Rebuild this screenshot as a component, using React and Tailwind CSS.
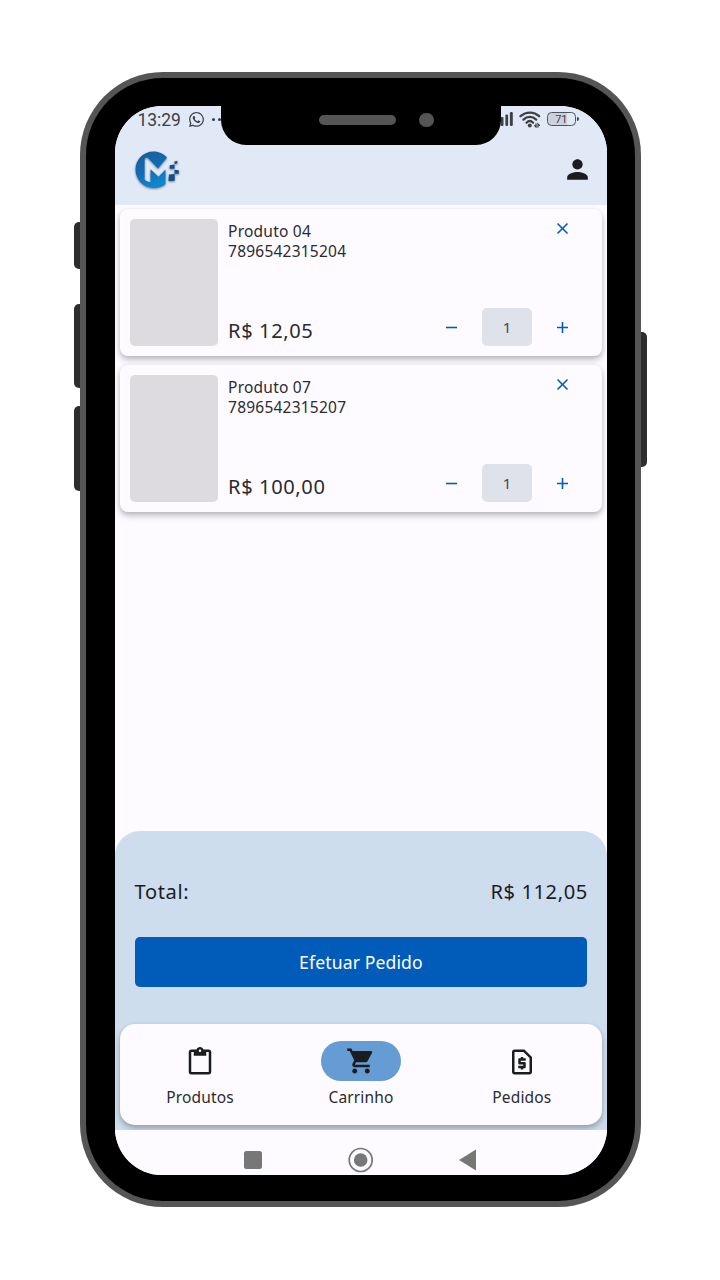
import React from 'react';
import {
  MdPerson,
  MdClose,
  MdAdd,
  MdRemove,
  MdContentPaste,
  MdShoppingCart,
  MdOutlineRequestPage,
} from 'react-icons/md';
import { FaWhatsapp } from 'react-icons/fa';

const products = [
  { name: 'Produto 04', code: '7896542315204', price: 'R$ 12,05', qty: 1 },
  { name: 'Produto 07', code: '7896542315207', price: 'R$ 100,00', qty: 1 },
];

function Logo() {
  return (
    <svg width="46" height="40" viewBox="0 0 46 40" className="drop-shadow-[0_1px_1px_rgba(40,50,70,0.6)]">
      <defs>
        <linearGradient id="logoBlue" x1="0" y1="0" x2="0.4" y2="1">
          <stop offset="0" stopColor="#165d9c" />
          <stop offset="0.55" stopColor="#106bb0" />
          <stop offset="1" stopColor="#0c86cc" />
        </linearGradient>
      </defs>
      <path
        d="M32 6.500C28.800 3 24 0.500 18.600 0.500C8.400 0.500 0.500 8.500 0.500 18.500S8.400 37 18.600 37C23.200 37 27.400 35.800 30.500 33V18.500L23.500 25.800L15.500 18.300V31.200C12.600 30.800 10.200 29.600 9.600 28.500V7.600L12.500 6.600L23 17.400Z"
        fill="url(#logoBlue)"
      />
      <path d="M39.500 10.500L42.300 9.700V12.400L39.600 13ZM34.700 14.300L39.500 13.500V17.700H34.700ZM39.500 18.800L43.800 19.200V22.700H39.500ZM34 23.500L39.700 23V29.700L33.500 30Z" fill="#174d8c" />
    </svg>
  );
}

function SignalIcon() {
  return (
    <svg width="13" height="14" viewBox="0 0 13 14" fill="#3d4047">
      <rect x="0.800" y="5" width="2.700" height="9" rx="1" />
      <rect x="5.400" y="2.500" width="2.700" height="11.500" rx="1.100" />
      <rect x="9.900" y="0" width="2.900" height="14" rx="1.200" />
    </svg>
  );
}

function WifiIcon() {
  return (
    <svg width="22" height="17" viewBox="0 0 22 17" fill="none" stroke="#3d4047" strokeWidth="2.300" strokeLinecap="round">
      <path d="M1.500 5.200C7 0.300 15 0.300 20.100 5.200" />
      <path d="M4.400 8.600C8.200 5 13.500 5 17.200 8.600" />
      <path d="M7.500 11.700C9.500 9.700 12.100 9.700 14.100 11.700" />
      <circle cx="10.800" cy="14.500" r="2" fill="#3d4047" stroke="none" />
      <path d="M15.800 14.600L17 16V13M19 16V13L20.400 14.400" strokeWidth="1.300" />
    </svg>
  );
}

function StatusBar() {
  return (
    <div className="flex h-[27px] items-center justify-between pl-[23px] pr-[28.500px] text-[#3d4047]">
      <div className="flex items-center">
        <span className="w-[50px] pt-[2px] font-['Roboto',sans-serif] text-[17.500px] leading-[27px] tracking-[-0.100px]">13:29</span>
        <FaWhatsapp size={17} />
        <div className="flex gap-[3px] pl-[7px]">
          <span className="size-[3px] rounded-full bg-[#3d4047]" />
          <span className="size-[3px] rounded-full bg-[#3d4047]" />
        </div>
      </div>
      <div className="flex items-center pb-px">
        <SignalIcon />
        <div className="pl-[6px] pr-[6px]">
          <WifiIcon />
        </div>
        <div className="flex h-[14px] w-[29px] items-center justify-center rounded-[4.500px] border-[1.500px] border-[#50535b] bg-[linear-gradient(90deg,#ccd2dd_0,#ccd2dd_70%,#e1e9f6_70%)] font-['Roboto',sans-serif] text-[11px] leading-none">
          71
        </div>
        <span className="ml-px h-[4px] w-[2px] rounded-r-sm bg-[#3d4047]" />
      </div>
    </div>
  );
}

function Header() {
  return (
    <header className="h-[98.500px] shrink-0 bg-[#e1e9f6]">
      <StatusBar />
      <div className="flex h-[71px] items-center justify-between pl-[20px] pr-[14.500px] text-[#1b1c1f]">
        <div className="pt-[5px]">
          <Logo />
        </div>
        <div className="pt-[2px]">
          <MdPerson size={31} />
        </div>
      </div>
    </header>
  );
}

function ProductCard({ product }) {
  return (
    <article className="flex h-[146.500px] rounded-[8px] bg-[#fdfbff] p-[10px] shadow-[0_4px_6px_rgba(0,0,0,0.22),0_1px_4px_rgba(0,0,0,0.1)]">
      <div className="w-[88px] shrink-0 rounded-[5px] bg-[#dddbe0]" />
      <div className="flex flex-1 flex-col justify-between pl-[10.500px] text-[#2a2b2f]">
        <div className="pt-[2px] text-[15.500px] leading-[20.100px] tracking-[0.220px]">
          <p>{product.name}</p>
          <p>{product.code}</p>
        </div>
        <p className="text-[20.080px] leading-[30px] tracking-[0.600px]">{product.price}</p>
      </div>
      <div className="flex w-[151px] flex-col items-end justify-between pr-[20.500px] text-[#005cb8]">
        <button className="flex h-[19px] w-[19px] items-end justify-center">
          <MdClose size={19} />
        </button>
        <div className="flex w-full items-center justify-between pl-px">
          <MdRemove size={19} className="mt-[2px]" />
          <span className="flex h-[38px] w-[50px] items-center justify-center rounded-[5px] bg-[#dfe2eb] pt-[2px] text-[15px] text-[#43474e]">
            {product.qty}
          </span>
          <MdAdd size={19} className="mt-[2px]" />
        </div>
      </div>
    </article>
  );
}

function NavItem({ icon, label, active }) {
  return (
    <div className="flex flex-1 flex-col items-center pt-[17px] text-[#1b1c1f]">
      <span className={active ? 'flex h-[40px] w-[80px] items-center justify-center rounded-full bg-[#659cd3]' : 'flex h-[40px] w-[80px] items-center justify-center'}>
        {icon}
      </span>
      <span className="mt-[6px] text-[15.500px] leading-[20px] tracking-[0.150px] text-[#2a2b2f]">{label}</span>
    </div>
  );
}

function Checkout() {
  return (
    <section className="flex h-[299.300px] shrink-0 flex-col rounded-t-[25px] bg-[#cdddee] px-[5px] pb-[5px]">
      <div className="flex h-[106px] items-end justify-between pl-[15px] pr-[14.500px] pb-[30px] text-[20.080px] leading-[30px] tracking-[0.600px] text-[#1b1c1f]">
        <span>Total:</span>
        <span>R$ 112,05</span>
      </div>
      <button className="mx-[15px] h-[50px] rounded-[5px] bg-[#005cb8] text-[17.570px] tracking-[0.130px] text-white">
        Efetuar Pedido
      </button>
      <nav className="mt-auto flex h-[100.800px] rounded-[15px] bg-[#fdfbff] shadow-[0_4px_6px_rgba(0,0,0,0.22),0_1px_4px_rgba(0,0,0,0.1)]">
        <NavItem icon={<MdContentPaste size={30} className="mt-px" />} label="Produtos" />
        <NavItem icon={<MdShoppingCart size={30} />} label="Carrinho" active />
        <NavItem icon={<MdOutlineRequestPage size={30} className="mt-px" />} label="Pedidos" />
      </nav>
    </section>
  );
}

function SystemNav() {
  return (
    <div className="flex h-[44.500px] shrink-0 justify-center bg-[#fdfbff]">
      <svg width="240" height="44" viewBox="0 0 240 44" fill="#777">
        <rect x="3" y="21" width="18" height="18" rx="2.500" />
        <circle cx="119.700" cy="30" r="11.500" fill="none" stroke="#777" strokeWidth="1.700" />
        <circle cx="119.700" cy="30" r="6.800" />
        <path d="M218 30L235 19.500V40.500Z" />
      </svg>
    </div>
  );
}

export default function App() {
  return (
    <main className="flex h-[1280px] w-[720px] items-start bg-white pl-[80px] pt-[71.500px] font-['Noto_Sans',sans-serif]">
      <div className="relative h-[1135px] w-[561px]">
        <span className="absolute -left-[6.500px] top-[150.500px] h-[47px] w-[10px] rounded-l-[5px] bg-[#2d2d2d]" />
        <span className="absolute -left-[6.500px] top-[232px] h-[84.500px] w-[10px] rounded-l-[5px] bg-[#2d2d2d]" />
        <span className="absolute -left-[6.500px] top-[334.500px] h-[85px] w-[10px] rounded-l-[5px] bg-[#2d2d2d]" />
        <span className="absolute -right-[6px] top-[260px] h-[135.500px] w-[10px] rounded-r-[5px] bg-[#2d2d2d]" />
        <div className="relative h-full w-full rounded-[83px] bg-[#555] p-[6px]">
          <div className="h-full w-full rounded-[77px] bg-black pb-[26px] pl-[28.600px] pr-[27.700px] pt-[28.500px]">
            <div className="flex h-full w-full flex-col overflow-hidden rounded-[47px] bg-[#fdfbff]">
              <Header />
              <div className="flex flex-1 flex-col gap-[9.500px] px-[5px] pt-[4.500px]">
                {products.map((p) => (
                  <ProductCard key={p.code} product={p} />
                ))}
              </div>
              <Checkout />
              <SystemNav />
            </div>
          </div>
          <div className="absolute left-[140.500px] top-[30px] flex h-[43px] w-[280px] items-center rounded-b-[25px] bg-black pb-[6px] pl-[98.500px]">
            <span className="h-[10px] w-[77px] rounded-full bg-[#555]" />
            <span className="ml-[23px] size-[14.500px] rounded-full bg-[#555]" />
          </div>
        </div>
      </div>
    </main>
  );
}
